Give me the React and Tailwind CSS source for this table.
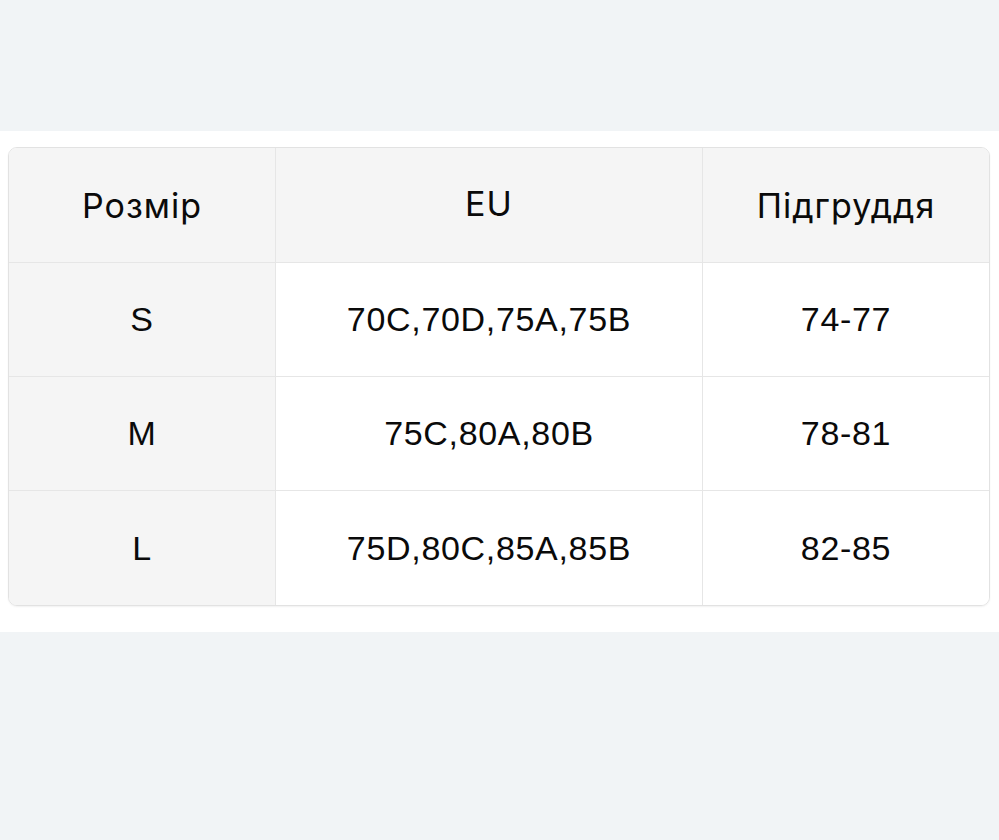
const HEAD = ["Розмір", "EU", "Підгруддя"];
const ROWS = [
  ["S", "70C,70D,75A,75B", "74-77"],
  ["M", "75C,80A,80B", "78-81"],
  ["L", "75D,80C,85A,85B", "82-85"],
];

export default function App() {
  return (
    <div
      className="w-[999px] h-[840px] bg-[#f1f4f6] flex flex-col"
      style={{ fontFamily: '"Liberation Sans", Arial, sans-serif' }}
    >
      <div className="h-[131px]" />
      <div className="bg-white h-[501px] pt-[16px] px-[8px]">
        <div className="w-[982px] rounded-[9px] border border-[#e2e2e2] overflow-hidden shadow-[0_1px_2px_rgba(0,0,0,0.06)] text-[#0a0a0a]">
          <div className="flex h-[115px] bg-[#f5f5f5] border-b border-[#e6e6e6] font-['Inter',sans-serif] text-[34px] tracking-[0.03em]">
            <div className="w-[267px] flex items-center justify-center border-r border-[#e6e6e6]">{HEAD[0]}</div>
            <div className="w-[427px] flex items-center justify-center border-r border-[#e6e6e6] pb-[4px]">{HEAD[1]}</div>
            <div className="flex-1 flex items-center justify-center">{HEAD[2]}</div>
          </div>
          {ROWS.map((r, i) => (
            <div key={i} className={`flex h-[114px] text-[34px] tracking-[0.02em] ${i < ROWS.length - 1 ? "border-b border-[#e6e6e6]" : ""}`}>
              <div className="w-[267px] bg-[#f5f5f5] flex items-center justify-center border-r border-[#e6e6e6]">{r[0]}</div>
              <div className="w-[427px] bg-white flex items-center justify-center border-r border-[#e6e6e6]">{r[1]}</div>
              <div className="flex-1 bg-white flex items-center justify-center">{r[2]}</div>
            </div>
          ))}
        </div>
      </div>
      <div className="flex-1" />
    </div>
  );
}
